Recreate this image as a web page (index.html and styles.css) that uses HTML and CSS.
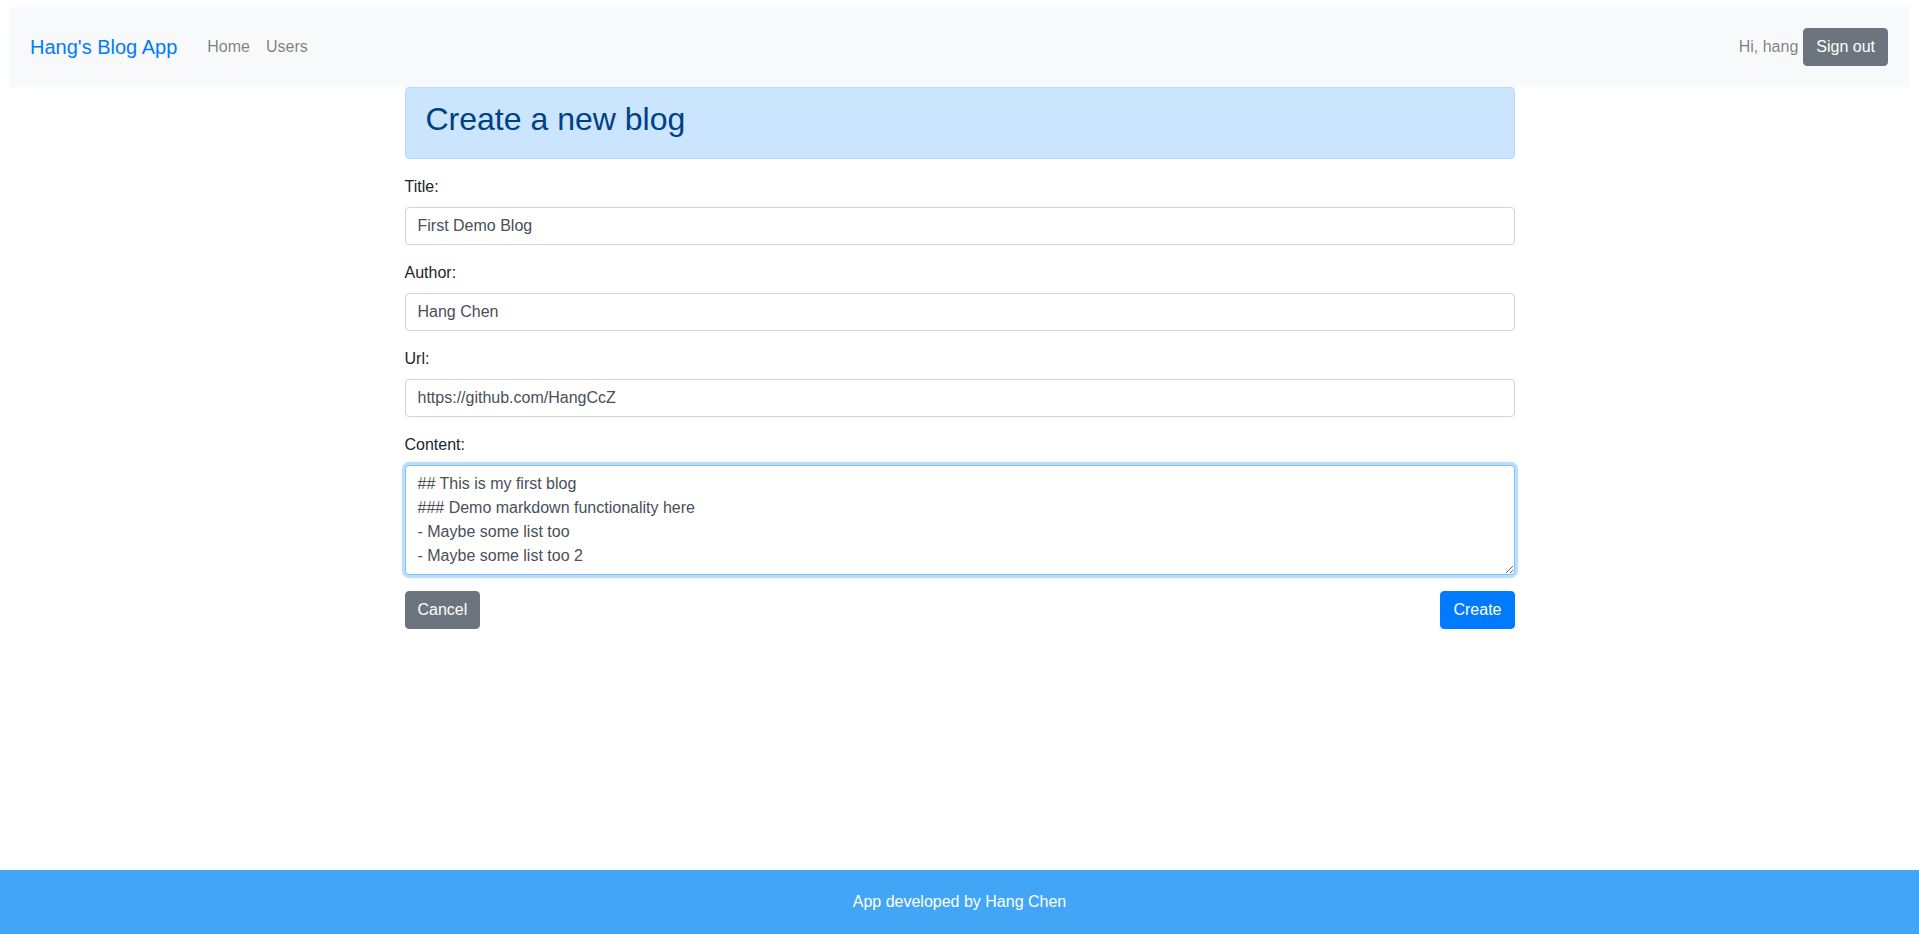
FILE: index.html
```html
<!DOCTYPE html>
<html lang="en">
<head>
<meta charset="utf-8">
<title>Hang's Blog App</title>
<link rel="stylesheet" href="styles.css">
</head>
<body>
<nav class="navbar">
  <a class="navbar-brand" href="#">Hang's Blog App</a>
  <div class="nav-links">
    <a class="nav-link" href="#">Home</a>
    <a class="nav-link" href="#">Users</a>
  </div>
  <div class="nav-right">
    <span class="navbar-text">Hi, hang</span>
    <button class="btn btn-secondary" type="button">Sign out</button>
  </div>
</nav>
<main class="container">
  <div class="alert alert-primary">
    <h2 class="alert-title">Create a new blog</h2>
  </div>
  <form class="blog-form">
    <div class="form-group">
      <label class="form-label" for="title">Title:</label>
      <input class="form-control" id="title" type="text" value="First Demo Blog">
    </div>
    <div class="form-group">
      <label class="form-label" for="author">Author:</label>
      <input class="form-control" id="author" type="text" value="Hang Chen">
    </div>
    <div class="form-group">
      <label class="form-label" for="url">Url:</label>
      <input class="form-control" id="url" type="text" value="https://github.com/HangCcZ">
    </div>
    <div class="form-group">
      <label class="form-label" for="content">Content:</label>
      <textarea class="form-control form-textarea is-focused" id="content" rows="4">## This is my first blog
### Demo markdown functionality here
- Maybe some list too
- Maybe some list too 2</textarea>
    </div>
    <div class="form-actions">
      <button class="btn btn-secondary" type="button">Cancel</button>
      <button class="btn btn-primary" type="submit">Create</button>
    </div>
  </form>
</main>
<footer class="footer">App developed by Hang Chen</footer>
</body>
</html>
```

FILE: styles.css
```css
* {
  box-sizing: border-box;
}

html, body {
  margin: 0;
  padding: 0;
}

body {
  font-family: "Liberation Sans", Arial, sans-serif;
  font-size: 16px;
  line-height: 1.5;
  color: #212529;
  background: #ffffff;
}

.navbar {
  display: flex;
  align-items: center;
  margin: 7px 10px 0 9px;
  padding: 20px 21px 20px 21px;
  background: #f8f9fa;
}

.navbar-brand {
  font-size: 20px;
  line-height: 30px;
  padding: 5px 0;
  margin-right: 22px;
  color: #007bff;
  text-decoration: none;
  white-space: nowrap;
}

.nav-links {
  display: flex;
  flex: 1;
}

.nav-link {
  padding: 8px 8px;
  color: rgba(0, 0, 0, 0.5);
  text-decoration: none;
}

.nav-right {
  display: flex;
  align-items: center;
}

.navbar-text {
  color: rgba(0, 0, 0, 0.5);
  margin-right: 5px;
}

.btn {
  display: inline-block;
  font-family: inherit;
  font-size: 16px;
  line-height: 1.5;
  padding: 6px 12px;
  border: 1px solid transparent;
  border-radius: 4px;
  color: #ffffff;
  cursor: pointer;
}

.btn-secondary {
  background: #6c757d;
  border-color: #6c757d;
}

.btn-primary {
  background: #007bff;
  border-color: #007bff;
}

.container {
  max-width: 1140px;
  margin: 0 auto;
  padding: 0 15px;
}

.alert {
  padding: 12px 20px;
  margin-bottom: 16px;
  border: 1px solid #b8daff;
  border-radius: 4px;
  background: #cce5ff;
  color: #004085;
}

.alert-title {
  margin: 0 0 8px 0;
  font-size: 32px;
  font-weight: 500;
  line-height: 1.2;
}

.form-group {
  margin-bottom: 16px;
}

.form-label {
  display: inline-block;
  margin-bottom: 8px;
}

.form-control {
  display: block;
  width: 100%;
  height: 38px;
  padding: 6px 12px;
  font-family: inherit;
  font-size: 16px;
  line-height: 1.5;
  color: #495057;
  background: #ffffff;
  border: 1px solid #ced4da;
  border-radius: 4px;
  margin: 0;
}

.form-textarea {
  height: 110px;
  resize: vertical;
  overflow: auto;
}

.is-focused {
  border-color: #80bdff;
  outline: 0;
  box-shadow: 0 0 0 3.2px rgba(0, 123, 255, 0.25);
}

.form-actions {
  display: flex;
  justify-content: space-between;
}

.footer {
  position: fixed;
  left: 0;
  right: 0;
  bottom: 0;
  height: 64px;
  display: flex;
  align-items: center;
  justify-content: center;
  background: #42a5f5;
  color: #ffffff;
}
```
